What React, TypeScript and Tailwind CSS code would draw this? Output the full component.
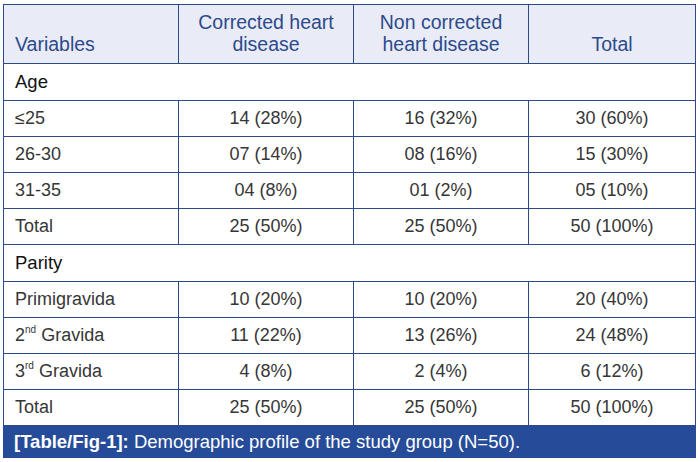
import React from "react";

const rows: (
  | { type: "group"; label: string; h: string }
  | { type: "data"; label: React.ReactNode; a: string; b: string; c: string; h: string }
)[] = [
  { type: "group", label: "Age", h: "h-[37px]" },
  { type: "data", label: "≤25", a: "14 (28%)", b: "16 (32%)", c: "30 (60%)", h: "h-[36px]" },
  { type: "data", label: "26-30", a: "07 (14%)", b: "08 (16%)", c: "15 (30%)", h: "h-[36px]" },
  { type: "data", label: "31-35", a: "04 (8%)", b: "01 (2%)", c: "05 (10%)", h: "h-[36px]" },
  { type: "data", label: "Total", a: "25 (50%)", b: "25 (50%)", c: "50 (100%)", h: "h-[36px]" },
  { type: "group", label: "Parity", h: "h-[37px]" },
  { type: "data", label: "Primigravida", a: "10 (20%)", b: "10 (20%)", c: "20 (40%)", h: "h-[36px]" },
  {
    type: "data",
    label: (
      <>
        2<sup className="text-[10px] relative top-[-1px] align-super leading-none">nd</sup> Gravida
      </>
    ),
    a: "11 (22%)",
    b: "13 (26%)",
    c: "24 (48%)",
    h: "h-[36px]",
  },
  {
    type: "data",
    label: (
      <>
        3<sup className="text-[10px] relative top-[-1px] align-super leading-none">rd</sup> Gravida
      </>
    ),
    a: "4 (8%)",
    b: "2 (4%)",
    c: "6 (12%)",
    h: "h-[36px]",
  },
  { type: "data", label: "Total", a: "25 (50%)", b: "25 (50%)", c: "50 (100%)", h: "h-[36px]" },
];

const cols = "grid grid-cols-[174px_175px_175px_167px]";

export default function App() {
  return (
    <div className="w-[700px] h-[462px] bg-white pt-[4px] pl-[3px]" style={{ fontFamily: '"Liberation Sans", Arial, sans-serif' }}>
      <div className="w-[693px] border border-[#2b4a86] border-b-0">
        <div className={`${cols} h-[59px] bg-[#e9ecf6] text-[#2c4a8c] text-[19.5px] leading-[22px] border-b border-[#2b4a86]`}>
          <div className="flex items-end pl-[11px] pb-[8px]">Variables</div>
          <div className="flex items-end justify-center text-center border-l border-[#2b4a86] pb-[8px]">
            Corrected heart
            <br />
            disease
          </div>
          <div className="flex items-end justify-center text-center border-l border-[#2b4a86] pb-[8px]">
            Non corrected
            <br />
            heart disease
          </div>
          <div className="flex items-end justify-center border-l border-[#2b4a86] pb-[8px]">Total</div>
        </div>
        {rows.map((r, i) =>
          r.type === "group" ? (
            <div key={i} className={`${r.h} flex items-center pl-[11px] text-[18.5px] text-[#111] border-b border-[#2b4a86]`}>
              {r.label}
            </div>
          ) : (
            <div key={i} className={`${cols} ${r.h} text-[18px] text-[#363636] border-b border-[#2b4a86]`}>
              <div className="flex items-center pl-[11px]">
                <span>{r.label}</span>
              </div>
              <div className="flex items-center justify-center border-l border-[#2b4a86]">{r.a}</div>
              <div className="flex items-center justify-center border-l border-[#2b4a86]">{r.b}</div>
              <div className="flex items-center justify-center border-l border-[#2b4a86]">{r.c}</div>
            </div>
          )
        )}
      </div>
      <div className="w-[693px] h-[32px] bg-[#264c99] text-white text-[18.5px] flex items-center pl-[11px]">
        <span className="font-bold">[Table/Fig-1]:</span>
        <span>&nbsp;Demographic profile of the study group (N=50).</span>
      </div>
    </div>
  );
}
